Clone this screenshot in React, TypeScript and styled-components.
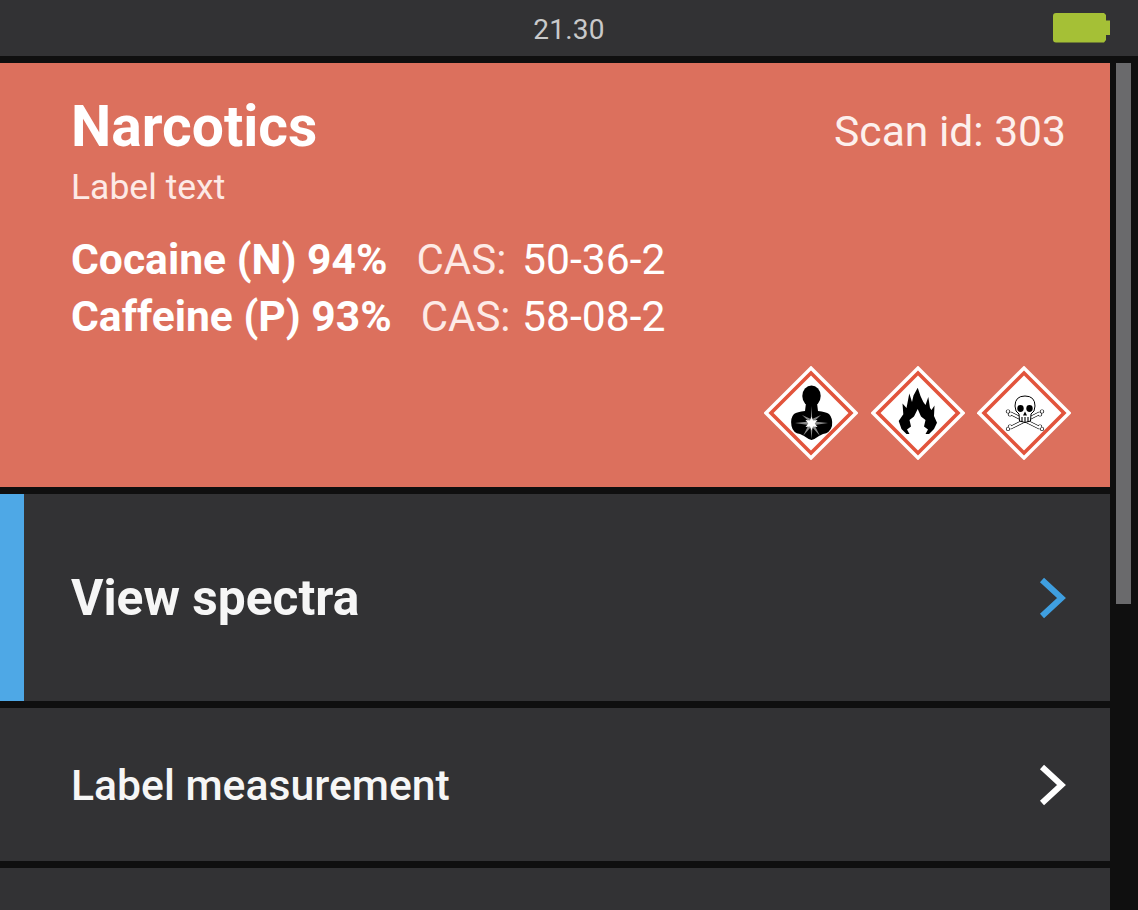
import React from 'react'
import styled, { createGlobalStyle } from 'styled-components'

const GlobalStyle = createGlobalStyle`
  html, body {
    margin: 0;
    padding: 0;
    background: #0f0f0f;
    overflow: hidden;
  }
  body {
    font-family: Roboto, "Liberation Sans", sans-serif;
  }
`

const Screen = styled.div`
  width: 1138px;
  height: 910px;
  overflow: hidden;
  background: #0f0f0f;
  color: #fff;
`

const StatusBar = styled.header`
  height: 56px;
  background: #323234;
  display: grid;
  grid-template-columns: 1fr auto 1fr;
  align-items: center;
  margin-bottom: 7px;
`

const Clock = styled.div`
  grid-column: 2;
  font-size: 28px;
  line-height: 1;
  color: #c9c9ca;
  padding-top: 3px;
  letter-spacing: 0.2px;
`

const BatterySlot = styled.div`
  grid-column: 3;
  display: flex;
  justify-content: flex-end;
  padding-right: 28px;
`

const Body = styled.div`
  display: grid;
  grid-template-columns: 1110px 28px;
`

const List = styled.main`
  display: flex;
  flex-direction: column;
  gap: 7px;
`

const ScrollTrack = styled.div`
  padding: 0 7px 0 6px;
`

const ScrollThumb = styled.div`
  height: 541px;
  background: #6a6a6c;
`

const ResultCard = styled.section`
  height: 424px;
  background: #dc705d;
  padding: 34px 44px 0 71px;
  box-sizing: border-box;
  display: flex;
  flex-direction: column;
`

const CardHead = styled.div`
  display: flex;
  justify-content: space-between;
  align-items: flex-start;
`

const Title = styled.h1`
  margin: 0;
  font-size: 57px;
  line-height: 60px;
  font-weight: 700;
  color: #fff;
`

const ScanId = styled.div`
  font-size: 42.6px;
  line-height: 48px;
  margin-top: 10px;
  color: #fdf0ed;
`

const LabelText = styled.div`
  font-size: 35.5px;
  line-height: 38px;
  margin-top: 11px;
  color: #fdeae6;
`

const Matches = styled.div`
  display: flex;
  flex-direction: column;
  margin-top: 25px;
`

const MatchRow = styled.div`
  display: grid;
  grid-template-columns: 451px 1fr;
  align-items: baseline;
  height: 57px;
  line-height: 57px;
`

const MatchLeft = styled.div`
  display: flex;
  align-items: baseline;
  gap: 29px;
`

const MatchName = styled.span`
  font-size: 42.6px;
  font-weight: 700;
  color: #fff;
  white-space: nowrap;
`

const CasLabel = styled.span`
  font-size: 42px;
  color: #fdeae6;
`

const CasValue = styled.span`
  font-size: 42.7px;
  color: #fff;
`

const Pictograms = styled.div`
  margin-top: auto;
  margin-bottom: 27px;
  margin-right: -5px;
  display: flex;
  justify-content: flex-end;
  gap: 12.5px;
`

const NavRow = styled.div<{ $height: number; $active?: boolean }>`
  height: ${({ $height }) => $height}px;
  background: #323234;
  box-sizing: border-box;
  display: flex;
  align-items: center;
  justify-content: space-between;
  padding: 0 43px 0 71px;
  box-shadow: ${({ $active }) => ($active ? 'inset 24px 0 0 #4ea8e6' : 'none')};
`

const NavTitle = styled.span<{ $strong?: boolean }>`
  font-size: ${({ $strong }) => ($strong ? 49.7 : 42.7)}px;
  font-weight: ${({ $strong }) => ($strong ? 700 : 500)};
  color: #f6f6f6;
`

const Chevron = ({ color }: { color: string }) => (
  <svg width="28" height="44" viewBox="0 0 28 44" fill="none">
    <path d="M3 4 L22.5 22 L3 40" stroke={color} strokeWidth="6" strokeLinejoin="miter" />
  </svg>
)

const Battery = () => (
  <svg width="57" height="30" viewBox="0 0 57 30">
    <path
      d="M3 0 H51 L53 2 V7.5 H57 V22 H53 V27 L51 29.5 H3 Q0 29.5 0 26.5 V3 Q0 0 3 0 Z"
      fill="#a5c036"
    />
  </svg>
)

// GHS diamond frame, shared by the three hazard pictograms
const Diamond = ({ children }: { children: React.ReactNode }) => (
  <svg width="94" height="94" viewBox="0 0 94 94">
    <rect x="13.5" y="13.5" width="67" height="67" fill="#fff" transform="rotate(45 47 47)" />
    <rect x="18.7" y="18.7" width="56.6" height="56.6" fill="#fff" stroke="#e2543c" strokeWidth="3.6" transform="rotate(45 47 47)" />
    {children}
  </svg>
)

const HealthHazard = () => (
  <Diamond>
    <ellipse cx="47.5" cy="30" rx="9.2" ry="10.5" fill="#000" />
    <path
      d="M42 37 H53 L54 45 Q62 46 65 48 Q69 52 68 60 Q66 67 59 68 L55 70 Q51 73 47.5 74 Q44 73 40 70 L36 68 Q29 67 27.5 60 Q26 52 30 48 Q33 46 41 45 Z"
      fill="#000"
    />
    <path
      d="M47.5 40 L48.2 53 L57 49 L50 55.5 L64 57 L50.5 59 L56 70 L48.5 61.5 L47.5 73 L46.5 61.5 L39 70 L44.5 59 L31 57 L45 55.5 L38 49 L46.8 53 Z"
      fill="#8a8a8a"
    />
    <path d="M47.5 50.5 L49 54.5 L53.5 54 L50.7 57.5 L53.5 61 L49 60.5 L47.5 64.5 L46 60.5 L41.5 61 L44.3 57.5 L41.5 54 L46 54.5 Z" fill="#fff" />
  </Diamond>
)

const Flame = () => (
  <Diamond>
    <path
      d="M46.7 21.7 L49.5 30 L52.3 36 L54.5 39 L57.3 31 L59 42 L60.5 44 L63.5 39.5 L63 50 L66 56.7 L63 63 L58 68 H35.5 L30.5 63 L27.7 55 L32.3 48.3 L31.5 37.5 L35.5 42 L38.3 27.5 L41 36 L42.5 29.5 Z"
      fill="#000"
    />
    <path
      d="M46.7 43 L50 50.5 L54.5 54 L53 60.5 L57 63.5 L54.5 68 H38.5 L36 63.5 L40 60.5 L38.5 54 L43 50.5 Z"
      fill="#fff"
    />
  </Diamond>
)

const bones = 'M33 47 L63 62 M63 47 L33 62'

const BoneEnds = ({ r, fill }: { r: number; fill: string }) => (
  <g fill={fill}>
    <circle cx="31" cy="45.5" r={r} />
    <circle cx="33" cy="48.5" r={r} />
    <circle cx="65" cy="45.5" r={r} />
    <circle cx="63" cy="48.5" r={r} />
    <circle cx="31" cy="63" r={r} />
    <circle cx="33" cy="60.5" r={r} />
    <circle cx="65" cy="63" r={r} />
    <circle cx="63" cy="60.5" r={r} />
  </g>
)

const Skull = () => (
  <Diamond>
    <BoneEnds r={2.1} fill="#000" />
    <path d={bones} stroke="#000" strokeWidth="3.4" fill="none" />
    <BoneEnds r={1.4} fill="#fff" />
    <path d={bones} stroke="#fff" strokeWidth="2.2" fill="none" />
    <path
      d="M48 30 Q58 30 58 40 Q58 46 54 48 L53.5 55 Q48 58 42.5 55 L42 48 Q38 46 38 40 Q38 30 48 30 Z"
      fill="#fff"
      stroke="#000"
      strokeWidth="1"
    />
    <ellipse cx="43.5" cy="42.5" rx="3.2" ry="3.4" fill="#000" />
    <ellipse cx="52.5" cy="42.5" rx="3.2" ry="3.4" fill="#000" />
    <path d="M48 45.5 L50 49.5 H46 Z" fill="#000" />
    <path d="M45 51 V56 M48 51 V57 M51 51 V56" stroke="#000" strokeWidth="1.1" />
  </Diamond>
)

const matches = [
  { name: 'Cocaine (N) 94%', cas: '50-36-2' },
  { name: 'Caffeine (P) 93%', cas: '58-08-2' },
]

export default function App() {
  return (
    <Screen>
      <GlobalStyle />
      <StatusBar>
        <Clock>21.30</Clock>
        <BatterySlot>
          <Battery />
        </BatterySlot>
      </StatusBar>
      <Body>
        <List>
          <ResultCard>
            <CardHead>
              <Title>Narcotics</Title>
              <ScanId>Scan id: 303</ScanId>
            </CardHead>
            <LabelText>Label text</LabelText>
            <Matches>
              {matches.map((m) => (
                <MatchRow key={m.cas}>
                  <MatchLeft>
                    <MatchName>{m.name}</MatchName>
                    <CasLabel>CAS:</CasLabel>
                  </MatchLeft>
                  <CasValue>{m.cas}</CasValue>
                </MatchRow>
              ))}
            </Matches>
            <Pictograms>
              <HealthHazard />
              <Flame />
              <Skull />
            </Pictograms>
          </ResultCard>
          <NavRow $height={207} $active>
            <NavTitle $strong>View spectra</NavTitle>
            <Chevron color="#3f9fe0" />
          </NavRow>
          <NavRow $height={153}>
            <NavTitle>Label measurement</NavTitle>
            <Chevron color="#ffffff" />
          </NavRow>
          <NavRow $height={60} />
        </List>
        <ScrollTrack>
          <ScrollThumb />
        </ScrollTrack>
      </Body>
    </Screen>
  )
}
